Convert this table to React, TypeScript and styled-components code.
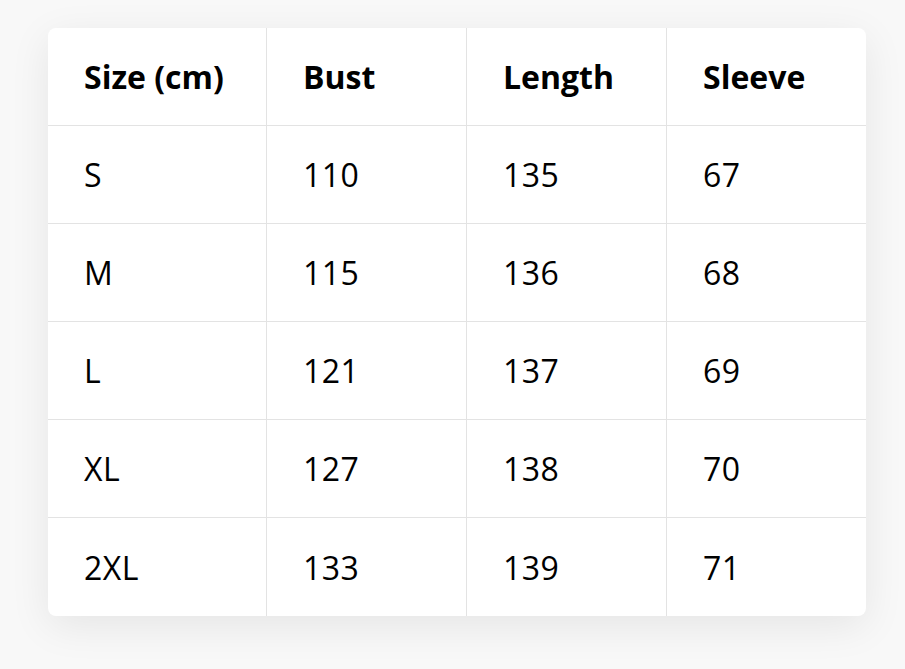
import React from "react"
import styled, { createGlobalStyle } from "styled-components"

const GlobalStyle = createGlobalStyle`
    html, body {
        margin: 0;
        padding: 0;
        background: #f8f8f8;
    }

    body {
        font-family: "Open Sans", "Noto Sans", "Liberation Sans", sans-serif;
        color: #000;
    }
`

const Page = styled.div`
    padding: 28px 0 0 48px;
    min-height: 669px;
    box-sizing: border-box;
`

const Card = styled.div`
    width: 818px;
    background: #fff;
    border-radius: 8px;
    box-shadow: 0 10px 40px rgba(0, 0, 0, 0.08);
    overflow: hidden;
`

const Grid = styled.div`
    display: grid;
    grid-template-columns: 219px 200px 200px 199px;
    grid-auto-rows: 98px;
`

const Cell = styled.div<{ $head?: boolean; $lastCol?: boolean; $lastRow?: boolean }>`
    display: flex;
    align-items: center;
    padding-left: 36px;
    font-size: 32px;
    font-weight: ${p => (p.$head ? 700 : 400)};
    letter-spacing: ${p => (p.$head ? "0" : "0.5px")};
    border-right: ${p => (p.$lastCol ? "none" : "1px solid #e3e3e3")};
    border-bottom: ${p => (p.$lastRow ? "none" : "1px solid #e3e3e3")};
    box-sizing: border-box;
`

const headers = ["Size (cm)", "Bust", "Length", "Sleeve"]

const rows = [
    ["S", "110", "135", "67"],
    ["M", "115", "136", "68"],
    ["L", "121", "137", "69"],
    ["XL", "127", "138", "70"],
    ["2XL", "133", "139", "71"],
]

/**
 * Size chart card.
 */
const App: React.FC = () => {
    return (
        <>
            <GlobalStyle />
            <Page>
                <Card>
                    <Grid>
                        {headers.map((h, i) => (
                            <Cell key={h} $head $lastCol={i === headers.length - 1}>
                                {h}
                            </Cell>
                        ))}

                        {rows.map((row, r) =>
                            row.map((v, c) => (
                                <Cell
                                    key={`${r}-${c}`}
                                    $lastCol={c === row.length - 1}
                                    $lastRow={r === rows.length - 1}
                                >
                                    {v}
                                </Cell>
                            ))
                        )}
                    </Grid>
                </Card>
            </Page>
        </>
    )
}

export default App
